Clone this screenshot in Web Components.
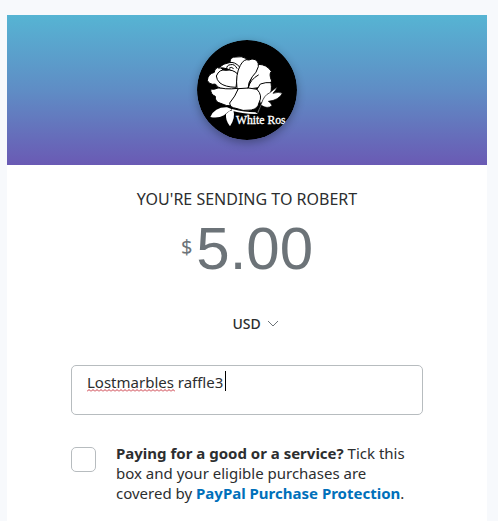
<!DOCTYPE html>
<html lang="en">
<head>
<meta charset="utf-8">
<meta name="viewport" content="width=device-width, initial-scale=1">
<title>Send money</title>
<style>
    body {
        margin: 0;
        padding: 15px 11px 0 7px;
        background: #f7f9fc;
        color: #2c2e2f;
        font: 15px/20px "Noto Sans", "Open Sans", sans-serif;
    }
</style>
</head>
<body>
<send-card>
    <profile-banner slot="banner"></profile-banner>
    <payment-amount currency="USD" value="5.00">You're sending to Robert</payment-amount>
    <note-field value="Lostmarbles raffle3"></note-field>
    <protection-option>
        <strong>Paying for a good or a service?</strong> Tick this box and your eligible purchases are covered by <a href="#protection">PayPal Purchase Protection</a>.
    </protection-option>
</send-card>

<script>
class SendCard extends HTMLElement {
    constructor() {
        super();
        const shadow = this.attachShadow({ mode: 'open' });
        shadow.innerHTML = `
            <style>
                :host {
                    display: block;
                    background: #fff;
                    min-height: calc(100vh - 15px);
                }
                main {
                    display: flex;
                    flex-direction: column;
                    padding: 24px 64px 16px;
                }
            </style>
            <slot name="banner"></slot>
            <main><slot></slot></main>
        `;
    }
}

class ProfileBanner extends HTMLElement {
    constructor() {
        super();
        const shadow = this.attachShadow({ mode: 'open' });
        shadow.innerHTML = `
            <style>
                :host {
                    display: flex;
                    justify-content: center;
                    padding: 25px 0;
                    background: linear-gradient(#56b4d3, #5f8dc5 50%, #6a5ab4);
                }
                svg {
                    width: 100px;
                    height: 100px;
                    border-radius: 50%;
                    box-shadow: 0 3px 8px rgba(0,0,0,0.3);
                }
                text {
                    font: 35px "Liberation Serif", serif;
                    stroke: #fff;
                    stroke-width: 1px;
                }
            </style>
            <svg viewBox="21 18 300 300" role="img" aria-label="White Rose">
                <circle cx="171" cy="168" r="150" fill="#000"/>
                <g fill="#fff" stroke="#000" stroke-width="3" stroke-linejoin="round">
                    <path d="M62 165 Q72 168 84 162 L145 163 L140 188 L128 215 Q110 218 92 208 Q74 204 76 187 Q62 182 62 165Z"/>
                    <path d="M52 139 Q54 120 73 115 Q74 100 91 99 L145 163 Q100 168 81 158 Q80 148 68 151 Q56 150 52 139Z"/>
                    <path d="M120 85 Q120 68 138 69 Q154 65 170 74 L164 88 L148 100Z"/>
                    <path d="M205 91 Q230 91 244 112 Q236 120 245 141 Q240 155 223 159 L174 165 Q184 121 205 91Z"/>
                    <path d="M201 166 L211 150 Q228 144 243 146 Q247 171 238 186 Q228 200 211 209Z"/>
                    <path d="M85 102 Q102 87 118 86 Q134 82 149 99 L144 122 Q112 98 85 102Z"/>
                    <path d="M79 126 Q88 104 108 109 Q128 105 143 120 L138 160 Q105 159 90 147 Q80 138 79 126Z"/>
                    <path d="M141 164 Q136 121 151 94 Q162 73 177 78 L186 75 Q207 76 205 98 Q200 116 187 128 Q174 145 174 165Z"/>
                    <path d="M145 164 Q179 159 201 166 Q219 185 207 206 Q204 224 184 228 Q158 233 138 223 Q120 221 119 207 Q136 187 145 164Z"/>
                </g>
                <g fill="none" stroke="#000" stroke-width="3" stroke-linecap="round">
                    <path d="M110 105 Q109 93 122 92 Q134 89 141 103 M118 102 Q124 97 130 103"/>
                    <path d="M174 162 Q181 136 205 123"/>
                </g>
                <g fill="#fff">
                    <path d="M61 249 Q74 219 111 220 L126 226 Q111 235 102 244 Q84 254 61 249Z"/>
                    <path d="M108 240 Q116 230 130 228 Q137 252 120 277 Q106 260 108 240Z"/>
                    <path d="M126 225 Q165 235 196 235 L204 240 Q155 239 126 230Z"/>
                    <path d="M214 209 Q222 184 238 177 L262 158 Q258 169 249 178 Q266 172 277 178 Q267 198 235 202 Q243 206 246 215 Q232 226 214 214 L205 236 L202 235Z" stroke="#000" stroke-width="2"/>
                    <text x="138" y="269">White Ros</text>
                </g>
            </svg>
        `;
    }
}

class PaymentAmount extends HTMLElement {
    constructor() {
        super();
        const shadow = this.attachShadow({ mode: 'open' });
        const value = this.getAttribute('value') || '0.00';
        const currency = this.getAttribute('currency') || 'USD';

        shadow.innerHTML = `
            <style>
                :host {
                    display: flex;
                    flex-direction: column;
                    align-items: center;
                }
                h1 {
                    margin: 0;
                    font-size: 16px;
                    font-weight: 400;
                    text-transform: uppercase;
                }
                .amount {
                    display: flex;
                    gap: 4px;
                    margin-top: 4px;
                    color: #6c7378;
                }
                .amount span {
                    padding-top: 20px;
                    font-size: 20px;
                    line-height: 28px;
                }
                .amount input {
                    field-sizing: content;
                    padding: 0;
                    border: 0;
                    outline: 0;
                    background: none;
                    color: inherit;
                    font: 60px/72px "Liberation Sans", Arial, sans-serif;
                }
                .currency {
                    display: grid;
                    align-items: center;
                    margin-top: 29px;
                }
                select, svg {
                    grid-area: 1 / 1;
                }
                select {
                    appearance: none;
                    padding: 0 17px;
                    border: 0;
                    background: none;
                    color: inherit;
                    font: 500 14px/20px "Noto Sans", "Open Sans", sans-serif;
                }
                svg {
                    justify-self: end;
                    width: 12px;
                    height: 8px;
                    pointer-events: none;
                }
            </style>
            <h1><slot></slot></h1>
            <label class="amount">
                <span>$</span>
                <input type="text" inputmode="decimal" aria-label="Amount" value="${value}">
            </label>
            <div class="currency">
                <select aria-label="Currency"><option>${currency}</option></select>
                <svg viewBox="0 0 12 8" fill="none" stroke="#6c7378"><path d="M1 1 L6 6 L11 1"/></svg>
            </div>
        `;
    }
}

class NoteField extends HTMLElement {
    constructor() {
        super();
        const shadow = this.attachShadow({ mode: 'open' });
        const value = this.getAttribute('value') || '';

        shadow.innerHTML = `
            <style>
                :host {
                    display: block;
                    position: relative;
                    margin-top: 31px;
                }
                textarea {
                    display: block;
                    box-sizing: border-box;
                    width: 100%;
                    height: 50px;
                    padding: 6px 15px;
                    border: 1px solid #b7bcbf;
                    border-radius: 5px;
                    outline: 0;
                    resize: none;
                    overflow: hidden;
                    color: inherit;
                    font: 15px/20px "Noto Sans", "Open Sans", sans-serif;
                }
                /* spelling mark and caret lie over the text */
                svg {
                    position: absolute;
                    top: 6px;
                    left: 16px;
                    width: 144px;
                    height: 22px;
                    pointer-events: none;
                }
            </style>
            <textarea aria-label="Note" spellcheck="false">${value}</textarea>
            <svg viewBox="0 0 144 22" fill="none">
                <defs>
                    <pattern id="wave" width="4" height="3" y="18" patternUnits="userSpaceOnUse">
                        <path d="M0 2.5 L2 0.5 L4 2.5" stroke="#c8303c"/>
                    </pattern>
                </defs>
                <rect y="18" width="88" height="3" fill="url(#wave)"/>
                <path d="M138.5 0 V20" stroke="#000"/>
            </svg>
        `;
    }
}

class ProtectionOption extends HTMLElement {
    constructor() {
        super();
        const shadow = this.attachShadow({ mode: 'open' });
        shadow.innerHTML = `
            <style>
                :host {
                    display: flex;
                    align-items: flex-start;
                    gap: 20px;
                    margin-top: 28px;
                }
                input {
                    appearance: none;
                    flex: none;
                    box-sizing: border-box;
                    width: 25px;
                    height: 25px;
                    margin: 4px 0 0;
                    border: 1px solid #b7bcbf;
                    border-radius: 5px;
                    background: #fff;
                }
                input:checked {
                    background: #0070ba;
                }
                ::slotted(a) {
                    color: #0070ba;
                    font-weight: 700;
                    text-decoration: none;
                }
            </style>
            <input type="checkbox" id="goods">
            <label for="goods"><slot></slot></label>
        `;
    }
}

customElements.define('send-card', SendCard);
customElements.define('profile-banner', ProfileBanner);
customElements.define('payment-amount', PaymentAmount);
customElements.define('note-field', NoteField);
customElements.define('protection-option', ProtectionOption);
</script>
</body>
</html>
